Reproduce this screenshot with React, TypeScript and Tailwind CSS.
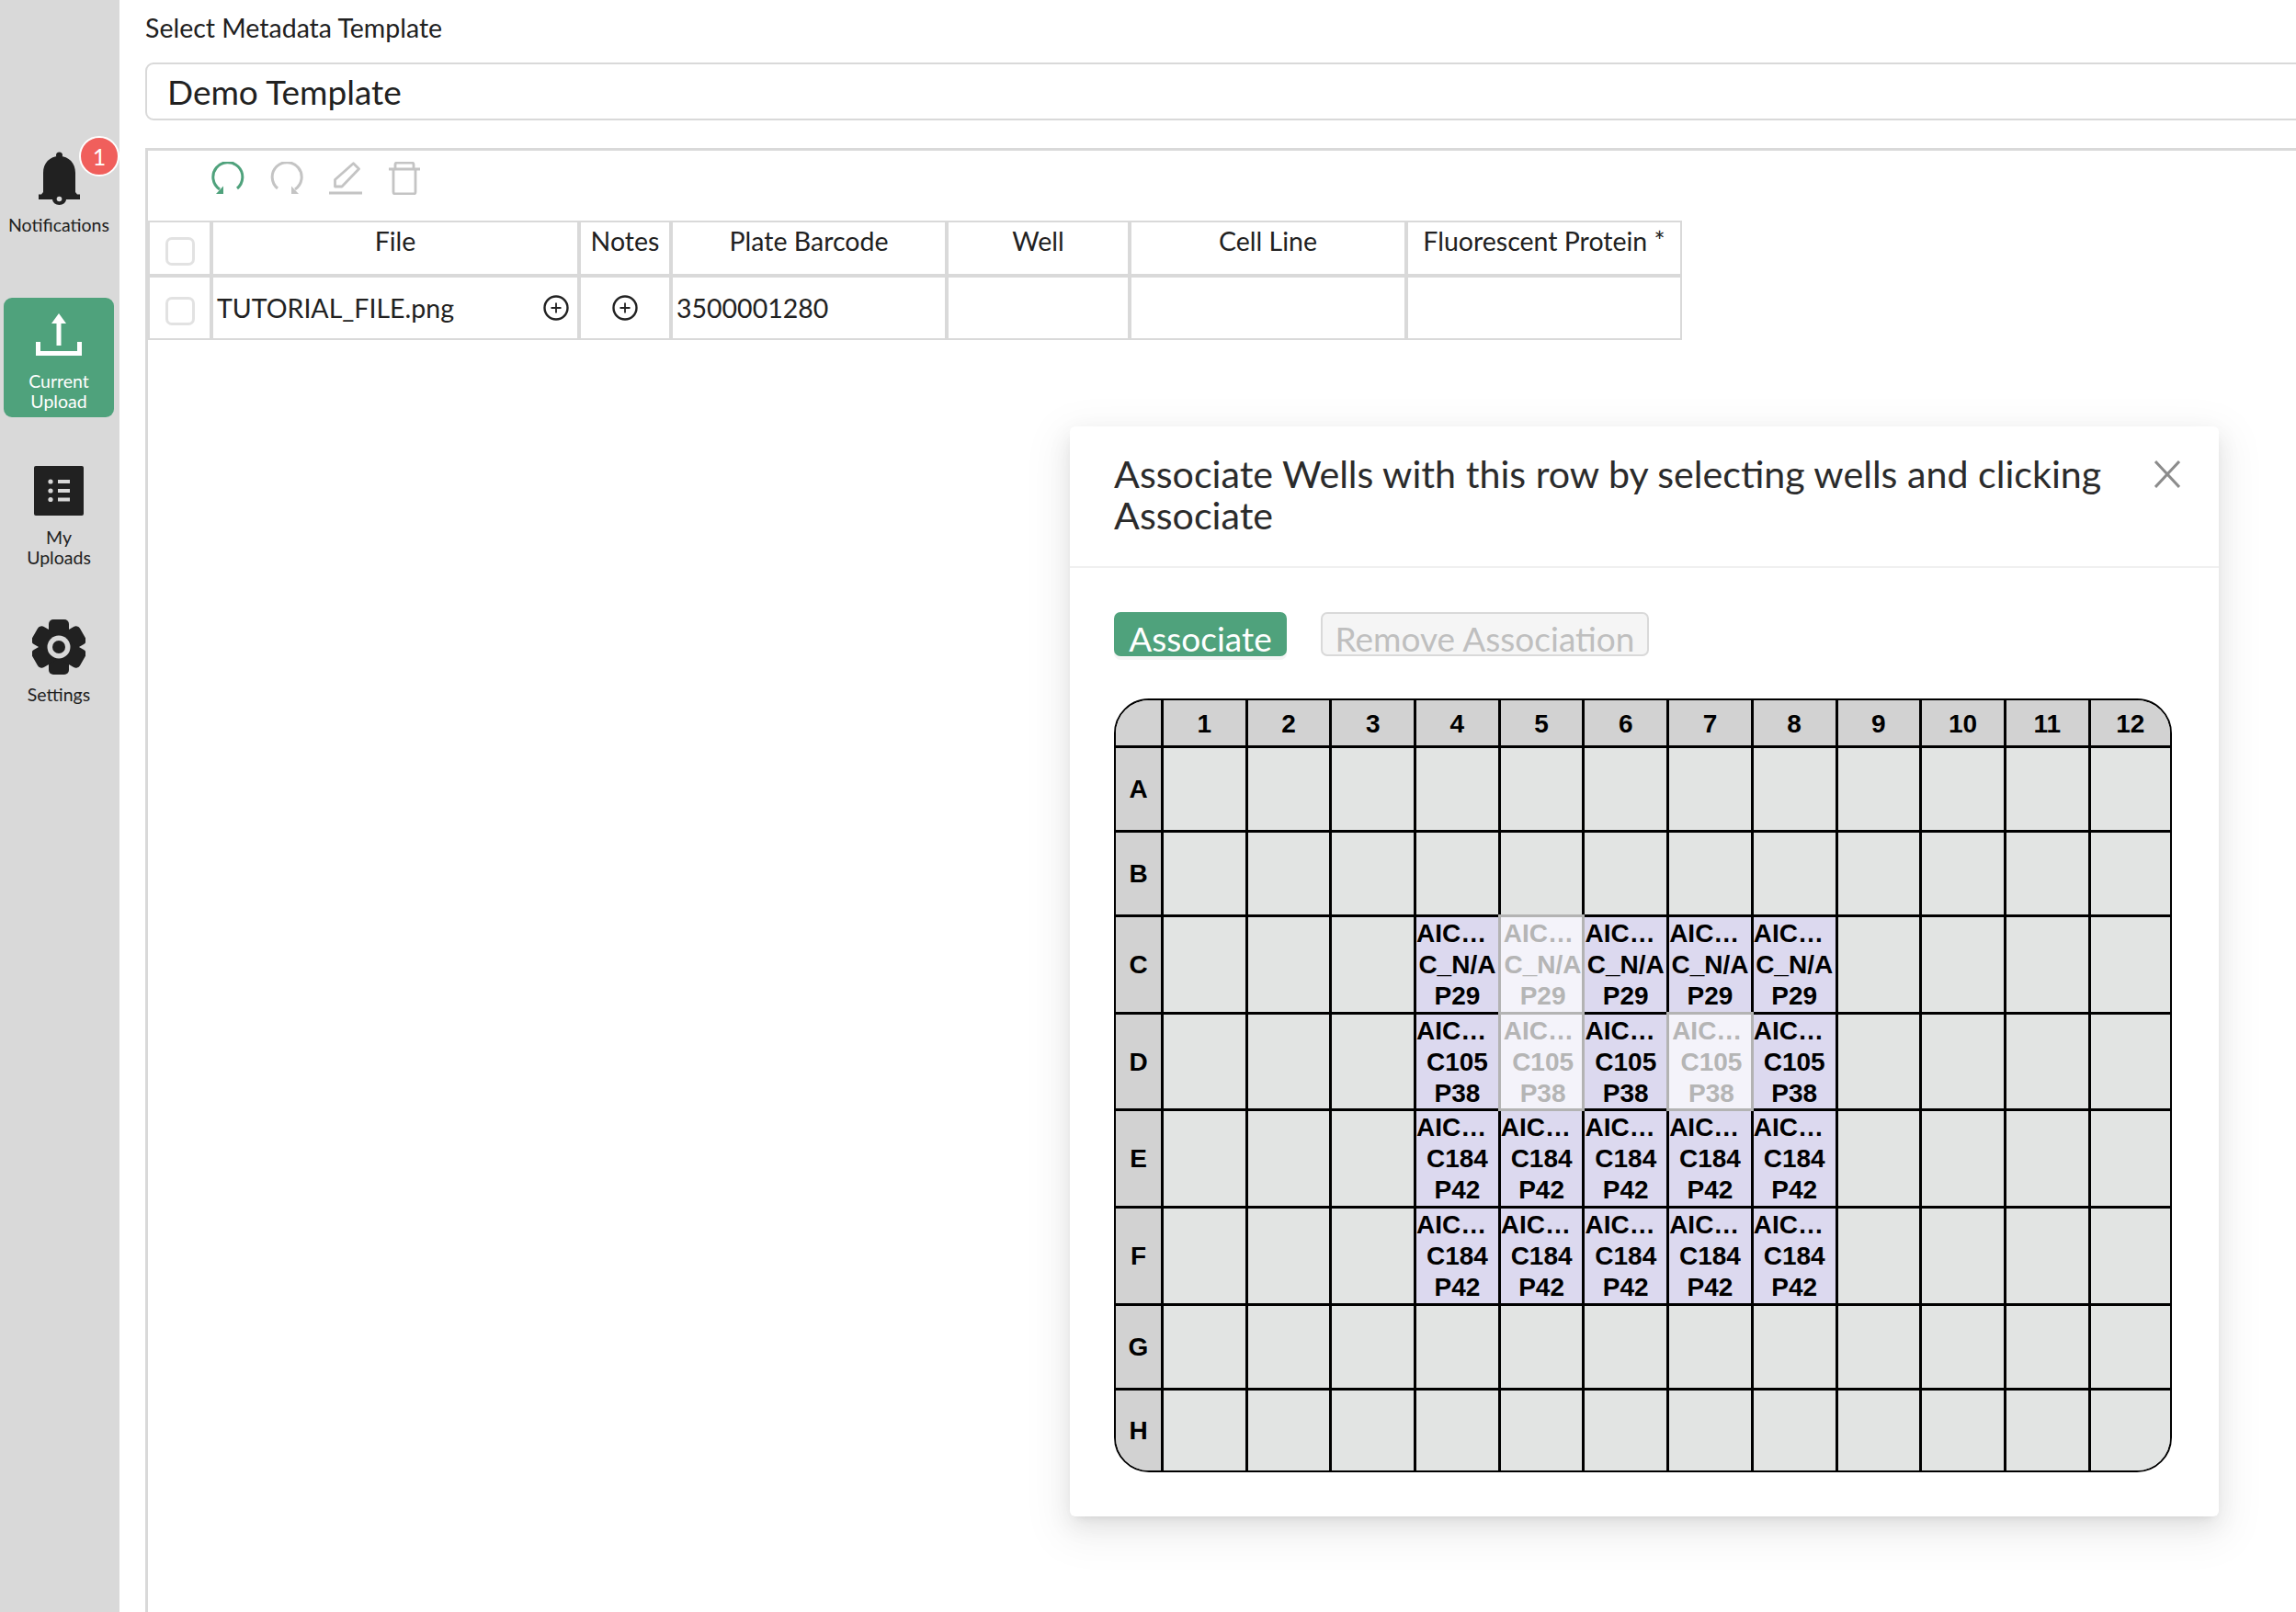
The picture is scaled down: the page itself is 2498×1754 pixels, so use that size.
import { Fragment } from "react";

const UI_FONT = "font-['Lato','Noto_Sans',sans-serif]";

const COLUMNS = [
  { label: "File", width: "w-[400px]" },
  { label: "Notes", width: "w-[100px]" },
  { label: "Plate Barcode", width: "w-[300px]" },
  { label: "Well", width: "w-[199px]" },
  { label: "Cell Line", width: "w-[301px]" },
  { label: "Fluorescent Protein *", width: "w-[300px]" },
];

const PLATE_ROWS = ["A", "B", "C", "D", "E", "F", "G", "H"];
const PLATE_COLS = [1, 2, 3, 4, 5, 6, 7, 8, 9, 10, 11, 12];

const WELL_TEXT: Record<string, [string, string]> = {
  C: ["C_N/A", "P29"],
  D: ["C105", "P38"],
  E: ["C184", "P42"],
  F: ["C184", "P42"],
};

// wells that are picked in the plate show up washed out
const PICKED = ["C5", "D5", "D7"];

function BellIcon() {
  return (
    <svg width="45" height="58" viewBox="0 0 45 58" fill="#212121">
      <circle cx="22.5" cy="4" r="3.5" />
      <path d="M22.5 5C12 5 5 12.5 5 23v21l-2 2.5H0V52h45v-5.500h-3L40 44V23C40 12.500 33 5 22.500 5z" />
      <path d="M15 52h15a7.500 6 0 0 1-15 0z" />
      <circle cx="22.500" cy="51.500" r="2.800" fill="#d9d9d9" />
    </svg>
  );
}

function UploadIcon() {
  return (
    <svg width="50" height="46" viewBox="0 0 50 46" fill="#fff">
      <path d="M25 0l8 11H27.500v24h-5V11H17z" />
      <path d="M0 31h5v10h40V31h5v15H0z" />
    </svg>
  );
}

function ListIcon() {
  return (
    <svg width="54" height="54" viewBox="0 0 54 54">
      <rect width="54" height="54" rx="2" fill="#212121" />
      <g fill="#d9d9d9">
        <circle cx="18" cy="17" r="2.600" />
        <circle cx="18" cy="27" r="2.600" />
        <circle cx="18" cy="36.500" r="2.600" />
        <rect x="26" y="15" width="13" height="4" />
        <rect x="26" y="25" width="13" height="4" />
        <rect x="26" y="34.500" width="13" height="4" />
      </g>
    </svg>
  );
}

function GearIcon() {
  return (
    <svg width="58" height="60" viewBox="0 0 58 60">
      <g fill="#212121">
        <circle cx="29" cy="30" r="22" />
        {[0, 60, 120].map((deg) => (
          <rect key={deg} x="18" y="0" width="22" height="60" rx="5" transform={`rotate(${deg} 29 30)`} />
        ))}
      </g>
      <circle cx="29" cy="30" r="12.500" fill="#d9d9d9" />
      <circle cx="29" cy="30" r="7" fill="#212121" />
    </svg>
  );
}

function UndoIcon({ color, flip }: { color: string; flip?: boolean }) {
  return (
    <svg width="36" height="36" viewBox="0 0 36 36" fill="none" className={flip ? "-scale-x-100" : ""}>
      <path d="M28.500 30A16 16 0 1 0 9.500 31" stroke={color} strokeWidth="3" transform="translate(-0.500 -1)" />
      <path d="M13 26.500V35H5z" fill={color} />
    </svg>
  );
}

function PencilIcon() {
  return (
    <svg width="36" height="36" viewBox="0 0 36 36" fill="none" stroke="#c4c4c4" strokeWidth="2.800">
      <path d="M6.500 19.500L26.500 1.800l6 6L14 27H6.500z" strokeLinejoin="round" />
      <path d="M0 34h36" strokeWidth="3" />
    </svg>
  );
}

function TrashIcon() {
  return (
    <svg width="34" height="36" viewBox="0 0 34 36" fill="none" stroke="#c4c4c4" strokeWidth="2.800">
      <path d="M0 8h34" />
      <path d="M7 8V3a2 2 0 0 1 2-2h16a2 2 0 0 1 2 2v5" />
      <path d="M5 8v25a2 2 0 0 0 2 2h20a2 2 0 0 0 2-2V8" />
    </svg>
  );
}

function PlusCircle() {
  return (
    <svg width="28" height="28" viewBox="0 0 28 28" fill="none" stroke="#222" strokeWidth="2.400">
      <circle cx="14" cy="14" r="12.500" />
      <path d="M14 8.500v11M8.500 14h11" strokeWidth="1.800" />
    </svg>
  );
}

function Checkbox() {
  return <div className="h-[31px] w-[32px] rounded-[7px] border-[3px] border-[#e2e2e2] bg-white" />;
}

function Sidebar() {
  return (
    <aside className="flex w-[130px] shrink-0 flex-col items-center bg-[#d9d9d9] pr-[2px] pt-[165px] text-[19.500px] leading-[22px] text-[#212121]">
      <div className="relative flex h-[58px] w-full justify-center">
        <BellIcon />
        <span className="absolute left-[86px] top-[-17px] flex h-[44px] w-[44px] items-center justify-center rounded-full border-2 border-white bg-[#f05f5c] text-[25px] text-white">
          1
        </span>
      </div>
      <span className="mt-[11px]">Notifications</span>
      <div className="mt-[68px] flex h-[130px] w-[120px] flex-col items-center rounded-[9px] bg-[#4fa27c] pt-[17px] text-white">
        <UploadIcon />
        <span className="mt-[17px] text-center">
          Current
          <br />
          Upload
        </span>
      </div>
      <div className="mt-[53px]">
        <ListIcon />
      </div>
      <span className="mt-[13px] text-center">
        My
        <br />
        Uploads
      </span>
      <div className="mt-[56px]">
        <GearIcon />
      </div>
      <span className="mt-[11px]">Settings</span>
    </aside>
  );
}

function MetadataTable() {
  return (
    <div className="flex w-[1669px] flex-col text-[28.500px] leading-[36px] text-[#212121]">
      <div className="flex h-[60px]">
        <div className="flex w-[69px] items-start justify-center border-2 border-[#d9d9d9] pt-[16px]">
          <Checkbox />
        </div>
        {COLUMNS.map((col) => (
          <div key={col.label} className={`${col.width} border-2 border-[#d9d9d9] pt-[2px] text-center`}>
            {col.label}
          </div>
        ))}
      </div>
      <div className="flex h-[70px]">
        <div className="flex w-[69px] items-center justify-center border-2 border-[#d9d9d9] pt-[6px]">
          <Checkbox />
        </div>
        <div className="flex w-[400px] items-center justify-between border-2 border-[#d9d9d9] pl-[4px] pr-[9px]">
          <span>TUTORIAL_FILE.png</span>
          <PlusCircle />
        </div>
        <div className="flex w-[100px] items-center justify-center border-2 border-[#d9d9d9]">
          <PlusCircle />
        </div>
        <div className="flex w-[300px] items-center border-2 border-[#d9d9d9] pl-[4px]">3500001280</div>
        <div className="w-[199px] border-2 border-[#d9d9d9]" />
        <div className="w-[301px] border-2 border-[#d9d9d9]" />
        <div className="w-[300px] border-2 border-[#d9d9d9]" />
      </div>
    </div>
  );
}

function Well({ row, col }: { row: string; col: number }) {
  const text = WELL_TEXT[row];
  const hasCells = text && col >= 4 && col <= 8;
  const picked = PICKED.includes(`${row}${col}`);
  const right = col === 12 ? "" : "border-r-[3px]";
  const bottom = row === "H" ? "" : "border-b-[3px]";

  if (!hasCells) {
    return <div className={`border-black bg-[#e2e4e3] ${right} ${bottom}`} />;
  }

  return (
    <div
      className={
        picked
          ? "z-10 -ml-[3px] -mt-[3px] flex flex-col justify-center border-[3px] border-[#b3b3b3] bg-[#f4f3fa] pl-[3px] pt-[1px] text-[#b5b5b5]"
          : `flex flex-col justify-center border-black bg-[#dcd9ef] pt-[1px] text-black ${right} ${bottom}`
      }
    >
      <div className="text-left">AIC…</div>
      <div className="whitespace-nowrap text-center">{text[0]}</div>
      <div className="text-center">{text[1]}</div>
    </div>
  );
}

function Plate() {
  return (
    <div className="h-[842px] w-[1151px] overflow-hidden rounded-[38px] border-2 border-black font-['Liberation_Sans',Arial,sans-serif] text-[28px] font-bold leading-[34px] text-black">
      <div className="grid h-full grid-cols-[52px_repeat(11,91.700px)_86.300px] grid-rows-[52px_92px_92px_106px_105px_106px_106px_92px_87px]">
        <div className="border-b-[3px] border-r-[3px] border-black bg-[#d2d2d2]" />
        {PLATE_COLS.map((col) => (
          <div
            key={col}
            className={`flex items-center justify-center border-b-[3px] border-black bg-[#d2d2d2] pt-[2px] ${col === 12 ? "" : "border-r-[3px]"}`}
          >
            {col}
          </div>
        ))}
        {PLATE_ROWS.map((row) => (
          <Fragment key={row}>
            <div
              className={`flex items-center justify-center border-r-[3px] border-black bg-[#d2d2d2] pt-[1px] ${row === "H" ? "" : "border-b-[3px]"}`}
            >
              {row}
            </div>
            {PLATE_COLS.map((col) => (
              <Well key={col} row={row} col={col} />
            ))}
          </Fragment>
        ))}
      </div>
    </div>
  );
}

function AssociateModal() {
  return (
    <div className="absolute left-[1164px] top-[464px] h-[1186px] w-[1250px] rounded-[6px] bg-white shadow-[0_5px_10px_-6px_rgba(0,0,0,0.12),0_10px_26px_0_rgba(0,0,0,0.08),0_14px_45px_13px_rgba(0,0,0,0.05)]">
      <div className="flex h-[154px] items-start justify-between border-b-2 border-[#f0f0f0] pl-[48px] pr-[42px] pt-[29px]">
        <h2 className="w-[1100px] text-[41.200px] leading-[45px] text-[#2b2b2b]">
          Associate Wells with this row by selecting wells and clicking Associate
        </h2>
        <svg width="28" height="30" viewBox="0 0 28 30" className="mt-[8px]" stroke="#8c8c8c" strokeWidth="3" fill="none">
          <path d="M1 1l26 28M27 1L1 29" />
        </svg>
      </div>
      <div className="pl-[48px] pt-[48px]">
        <div className="flex gap-[37px]">
          <button className="flex h-[48px] w-[188px] items-center justify-center rounded-[7px] bg-[#4fa27c] pt-[10px] text-[37px] text-white shadow-[0_4px_0_rgba(0,0,0,0.04)]">
            Associate
          </button>
          <button className="flex h-[48px] w-[357px] items-center justify-center rounded-[7px] border-2 border-[#d9d9d9] bg-[#f5f5f5] pt-[9px] text-[37px] text-[#bfbfbf]">
            Remove Association
          </button>
        </div>
        <div className="mt-[46px]">
          <Plate />
        </div>
      </div>
    </div>
  );
}

export default function App() {
  return (
    <div className={`relative flex h-[1754px] w-[2498px] overflow-hidden bg-white ${UI_FONT}`}>
      <Sidebar />
      <main className="flex flex-1 flex-col pl-[28px]">
        <div className="flex h-[68px] items-start pt-[12px] text-[28.500px] leading-[36px] text-[#212121]">
          Select Metadata Template
        </div>
        <div className="flex h-[63px] w-[2400px] shrink-0 items-center rounded-[9px] border-2 border-[#d9d9d9] pl-[22px] text-[37px] text-[#212121]">
          Demo Template
        </div>
        <section className="mt-[30px] flex-1 border-l-[3px] border-t-[3px] border-[#d9d9d9]">
          <div className="flex h-[76px] items-start pl-[69px] pt-[12px]">
            <UndoIcon color="#4fa27c" />
            <div className="ml-[28px]">
              <UndoIcon color="#c4c4c4" flip />
            </div>
            <div className="ml-[28px]">
              <PencilIcon />
            </div>
            <div className="ml-[29px]">
              <TrashIcon />
            </div>
          </div>
          <MetadataTable />
        </section>
      </main>
      <AssociateModal />
    </div>
  );
}
